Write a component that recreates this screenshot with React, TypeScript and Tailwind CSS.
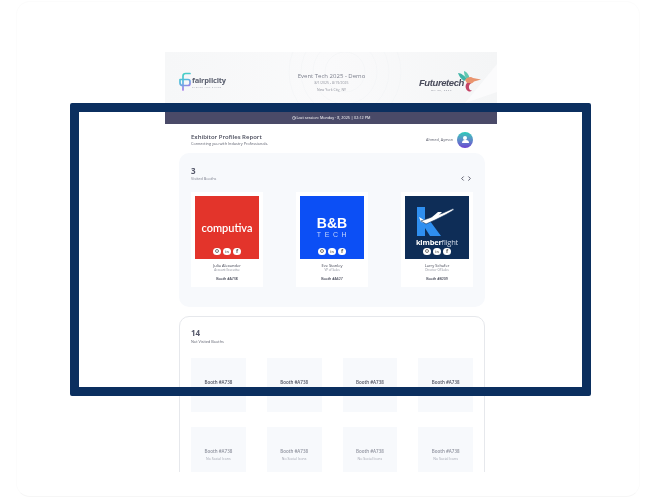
import { ChevronLeft, ChevronRight, Clock } from "lucide-react";
import type { ReactNode } from "react";

function FairplicityLogo() {
  return (
    <div className="flex items-center gap-[1px]">
      <svg width="12" height="20" viewBox="0 0 12 20" fill="none">
        <defs>
          <linearGradient id="fp" x1="0" y1="0" x2="0.3" y2="1">
            <stop offset="0" stopColor="#3fd8bd" />
            <stop offset="0.55" stopColor="#58b7e0" />
            <stop offset="1" stopColor="#a57be8" />
          </linearGradient>
        </defs>
        <path
          d="M11 1.5H6.5C5 1.5 4 2.5 4 4V18M1 7.5H9C10.2 7.5 11 8.3 11 9.5V11.5C11 12.7 10.2 13.5 9 13.5H4M1 7.5V11C1 12.5 2 13.5 4 13.5"
          stroke="url(#fp)"
          strokeWidth="1.7"
          strokeLinecap="round"
          strokeLinejoin="round"
        />
      </svg>
      <div className="flex flex-col items-start">
        <span className="text-[7.5px] leading-[9px] font-bold tracking-[-0.2px] text-[#5b6070]">fairplicity</span>
        <span className="text-[2.5px] leading-[4px] tracking-[0.4px] text-[#a5a8b4]">EVENTS AND EXPOS</span>
      </div>
    </div>
  );
}

function FuturetechLogo() {
  return (
    <div className="flex items-center">
      <div className="flex flex-col items-center mt-[6px]">
        <span className="text-[9.5px] leading-[10px] font-bold italic tracking-[-0.4px] text-[#4a4c5c] [font-family:'Liberation_Sans',sans-serif]">
          Futuretech
        </span>
        <span className="text-[2.5px] leading-[4px] tracking-[0.6px] text-[#8b8e9a]">ON 30, 2025</span>
      </div>
      <svg width="25" height="23" viewBox="0 0 25 23" className="-ml-[7px] -mt-[2px]" fill="none">
        <path d="M1 3C4 3 8 6 10 9L7 11C4 9 2 6 1 3Z" fill="#3fb5a8" />
        <path d="M7 1C10 2 12 5 12.5 8L9.5 9C8 7 7 4 7 1Z" fill="#62c7b1" />
        <path d="M8 10C10 7 14 6 16 8L24 9.5L17 11.5C15 14 12 14 10 13Z" fill="#e9946e" />
        <path d="M10 13C8 15 8 19 11 21C12.5 22 14 21.5 15 20.5C13 20.5 11.5 19 12 16C12.3 15 13 14 14 13Z" fill="#c44466" />
      </svg>
    </div>
  );
}

function KimberLogo() {
  return (
    <div className="relative w-full h-full flex flex-col items-center">
      <svg width="44" height="32" viewBox="0 0 44 32" className="absolute left-[11px] top-[10px]">
        <path d="M1 1H9V13L14 15L25 30H14L9 22V30H1Z" fill="#2f8ff0" />
        <path d="M3 11L8 14L9 17L5 16Z" fill="#ffffff" />
        <path d="M5 15L16 11L27 7L36 3C38 2.3 38.5 3.5 37 4.5L30 8.5L19 14L10 18Z" fill="#ffffff" stroke="#0e2d57" strokeWidth="0.6" />
        <path d="M15 12L22 6L26 6L21 11Z" fill="#ffffff" />
      </svg>
      <span className="absolute top-[42px] text-[7.5px] leading-[8px] text-white font-bold tracking-[-0.2px]">
        kimber<span className="font-normal text-[#cfd8e6]">flight</span>
      </span>
    </div>
  );
}

function SocialDots() {
  return (
    <div className="absolute bottom-[4px] left-0 right-0 flex justify-center gap-[2.5px]">
      <span className="w-[7.5px] h-[7.5px] rounded-full bg-white flex items-center justify-center">
        <span className="w-[4px] h-[4px] rounded-full border-[0.7px] border-[#777]" />
      </span>
      <span className="w-[7.5px] h-[7.5px] rounded-full bg-white flex items-center justify-center text-[3.5px] font-bold text-[#666]">
        in
      </span>
      <span className="w-[7.5px] h-[7.5px] rounded-full bg-white flex items-center justify-center text-[5.5px] font-bold text-[#555]">
        f
      </span>
    </div>
  );
}

function VisitedCard({
  logo,
  bg,
  name,
  role,
  booth,
}: {
  logo: ReactNode;
  bg: string;
  name: string;
  role: string;
  booth: string;
}) {
  return (
    <div className="w-[72px] h-[95px] bg-white pt-[4px] flex flex-col items-center">
      <div className={`relative w-[64px] h-[63px] shrink-0 ${bg}`}>
        {logo}
        <SocialDots />
      </div>
      <div className="mt-[4px] text-[4px] leading-[5px] text-[#3c3f4e]">{name}</div>
      <div className="text-[3px] leading-[5px] text-[#8a8d99]">{role}</div>
      <div className="mt-[3px] text-[3.5px] leading-[5px] font-semibold text-[#3c3f4e]">{booth}</div>
    </div>
  );
}

function BoothTile({ faded }: { faded?: boolean }) {
  return (
    <div className="h-[54px] shrink-0 bg-[#f7f9fc] flex flex-col items-center justify-center gap-[2px] pt-[1px]">
      <div className={`text-[4.5px] leading-[6px] font-semibold ${faded ? "text-[#8f929e]" : "text-[#4d505e]"}`}>
        Booth #A738
      </div>
      <div className="text-[3.5px] leading-[5px] text-[#a3a6b1]">No Social Icons</div>
    </div>
  );
}

export default function App() {
  return (
    <div className="relative w-[663px] h-[499px] bg-white overflow-hidden pl-[16px] pt-[1px] [font-family:'Open_Sans',sans-serif]">
      <div className="w-[624px] h-[496px] rounded-[14px] border border-[#fcfcfc] border-b-[#f6f6f6] pl-[148px] pt-[50px]">
        {/* the report page */}
        <div className="w-[332px] h-[420px] overflow-hidden bg-white blur-[0.35px]">
          <div className="relative h-[60px] bg-gradient-to-r from-[#f6f7f8] via-[#fafafb] to-[#f4f5f6] grid grid-cols-[1fr_auto_1fr] items-center pl-[14px] pr-[15px] overflow-hidden">
            <svg className="absolute inset-0" width="332" height="60" fill="none" stroke="#f1f2f4" strokeWidth="0.5">
              <circle cx="180" cy="20" r="20" />
              <circle cx="180" cy="20" r="32" />
              <circle cx="180" cy="20" r="44" />
              <circle cx="180" cy="20" r="56" />
              <path d="M332 12L300 51L332 40Z" fill="#fbfbfc" stroke="none" />
            </svg>
            <div className="relative justify-self-start">
              <FairplicityLogo />
            </div>
            <div className="relative flex flex-col items-center pl-[2px] text-[#7c7f8c]">
              <div className="text-[6px] leading-[8px]">Event Tech 2025 - Demo</div>
              <div className="text-[3.5px] leading-[6px] text-[#8f929d]">8/1/2025 - 8/19/2025</div>
              <div className="text-[3.5px] leading-[7px] text-[#8f929d]">New York City, NY</div>
            </div>
            <div className="relative justify-self-end">
              <FuturetechLogo />
            </div>
          </div>
          <div className="h-[12px] bg-[#4a4a68] flex items-center justify-center gap-[1px] text-[3.8px] text-white">
            <Clock size={4} strokeWidth={2.5} />
            <span>Last session: Monday · 8, 2025 | 02:12 PM</span>
          </div>

          <div className="flex items-center justify-between pl-[26px] pr-[24px] h-[29px] pt-[2px]">
            <div>
              <div className="text-[6px] leading-[7px] font-semibold text-[#4a4c5c]">Exhibitor Profiles Report</div>
              <div className="text-[3.8px] leading-[5px] text-[#5f6270]">Connecting you with Industry Professionals.</div>
            </div>
            <div className="flex items-center gap-[4px]">
              <span className="text-[3.8px] text-[#5f6270]">Ahmed, Ayman</span>
              <span className="w-[16px] h-[16px] rounded-full bg-gradient-to-b from-[#1ecbb8] to-[#6a3fd0] flex flex-col items-center justify-center">
                <span className="w-[4.5px] h-[4.5px] rounded-full bg-white" />
                <span className="w-[7px] h-[3px] rounded-t-full bg-white" />
              </span>
            </div>
          </div>

          <section className="ml-[14px] mr-[12px] h-[154px] rounded-[10px] bg-[#f7f9fc] px-[12px] pt-[12px]">
            <div className="flex items-start justify-between h-[27px]">
              <div>
                <div className="text-[8px] leading-[11px] font-bold text-[#55586a]">3</div>
                <div className="text-[3.8px] leading-[6px] text-[#7f8290]">Visited Booths</div>
              </div>
              <div className="flex mt-[10px] text-[#4a4c5c]">
                <ChevronLeft size={7} strokeWidth={3} />
                <ChevronRight size={7} strokeWidth={3} />
              </div>
            </div>
            <div className="flex justify-between">
              <VisitedCard
                bg="bg-[#e3342b]"
                name="Julia Alexander"
                role="Account Executive"
                booth="Booth #A738"
                logo={
                  <div className="absolute top-[26px] w-full text-center text-[11px] leading-[11px] font-semibold text-white [font-family:'Lato',sans-serif]">
                    computiva
                  </div>
                }
              />
              <VisitedCard
                bg="bg-[#0c4ff5]"
                name="Eve Stanley"
                role="VP of Sales"
                booth="Booth #A627"
                logo={
                  <div className="absolute top-[19px] w-full flex flex-col items-center text-white [font-family:'Liberation_Sans',sans-serif]">
                    <span className="text-[14px] leading-[16px] font-bold">B&amp;B</span>
                    <span className="text-[7px] leading-[8px] tracking-[3.6px] pl-[3px] text-[#c4d4fb]">TECH</span>
                  </div>
                }
              />
              <VisitedCard
                bg="bg-[#0e2d57]"
                name="Larry Schafer"
                role="Director Of Sales"
                booth="Booth #B209"
                logo={<KimberLogo />}
              />
            </div>
          </section>

          <section className="ml-[14px] mr-[12px] mt-[9px] h-[170px] rounded-[10px] border border-[#e6e8ec] pl-[11px] pr-[11px] pt-[10px]">
            <div className="text-[8px] leading-[11px] font-bold text-[#55586a]">14</div>
            <div className="text-[3.8px] leading-[7px] text-[#5f6270]">Not Visited Booths</div>
            <div className="mt-[13px] grid grid-cols-4 gap-x-[21px] gap-y-[15px]">
              <BoothTile />
              <BoothTile />
              <BoothTile />
              <BoothTile />
              <BoothTile faded />
              <BoothTile faded />
              <BoothTile faded />
              <BoothTile faded />
            </div>
          </section>
        </div>
      </div>

      {/* navy frame lying over the report */}
      <div className="absolute left-[70px] top-[103px] w-[521px] h-[293px] rounded-[2px] border-[9px] border-[#0b2f5f]" />
    </div>
  );
}
